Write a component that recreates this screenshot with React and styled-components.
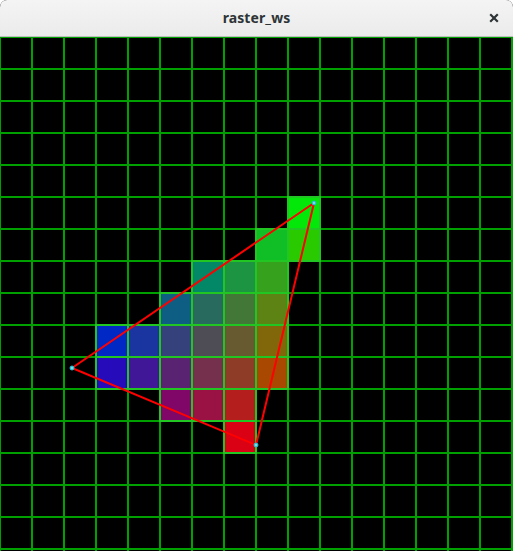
import React from "react";
import styled, { createGlobalStyle } from "styled-components";

const Global = createGlobalStyle`
  html, body { margin: 0; padding: 0; background: #ffffff; }
  body { font-family: "Noto Sans", "DejaVu Sans", sans-serif; }
`;

const Window = styled.div`
  width: 513px;
  height: 551px;
  display: flex;
  flex-direction: column;
  overflow: hidden;
  border-radius: 7px 7px 0 0;
  background: #000;
`;

const TitleBar = styled.header`
  height: 36px;
  flex: 0 0 36px;
  display: grid;
  grid-template-columns: 40px 1fr 40px;
  align-items: center;
  background: linear-gradient(#f4f4f4, #ebebeb);
  border-bottom: 1px solid #bdbdbd;
`;

const Title = styled.h1`
  grid-column: 2;
  margin: 0;
  text-align: center;
  font-family: "Noto Sans", "DejaVu Sans", sans-serif;
  font-size: 14px;
  font-weight: 700;
  color: #2e3436;
  line-height: 36px;
  letter-spacing: 0.1px;
`;

const CloseButton = styled.button`
  grid-column: 3;
  justify-self: end;
  margin-right: 11px;
  width: 16px;
  height: 16px;
  padding: 0;
  border: 0;
  background: transparent;
  display: flex;
  align-items: center;
  justify-content: center;
  cursor: pointer;
`;

const Canvas = styled.svg`
  display: block;
  flex: 1 1 auto;
  width: 513px;
  height: 514px;
  background: #000;
`;

const CELL = 32;
const G = [314, 166];
const B = [72, 331];
const R = [256, 408];

const cells = [
  [5, [9]],
  [6, [8, 9]],
  [7, [6, 7, 8]],
  [8, [5, 6, 7, 8]],
  [9, [3, 4, 5, 6, 7, 8]],
  [10, [3, 4, 5, 6, 7, 8]],
  [11, [5, 6, 7]],
  [12, [7]],
];

function bary(px, py) {
  const [x1, y1] = R, [x2, y2] = G, [x3, y3] = B;
  const d = (y2 - y3) * (x1 - x3) + (x3 - x2) * (y1 - y3);
  let a = ((y2 - y3) * (px - x3) + (x3 - x2) * (py - y3)) / d;
  let b = ((y3 - y1) * (px - x3) + (x1 - x3) * (py - y3)) / d;
  let c = 1 - a - b;
  a = Math.max(0, a); b = Math.max(0, b); c = Math.max(0, c);
  const s = a + b + c;
  return [a / s, b / s, c / s];
}

function cellColor(col, row) {
  const [r, g, b] = bary(col * CELL + 16, row * CELL + 16);
  return `rgb(${Math.round(r * 240)},${Math.round(g * 245)},${Math.round(b * 235)})`;
}

export default function App() {
  const lines = [];
  for (let i = 0; i <= 16; i++) {
    lines.push(<line key={"v" + i} x1={i * CELL} y1={0} x2={i * CELL} y2={514} />);
    lines.push(<line key={"h" + i} x1={0} y1={i * CELL} x2={513} y2={i * CELL} />);
  }
  const rects = [];
  cells.forEach(([row, cols]) =>
    cols.forEach((col) =>
      rects.push(
        <rect
          key={row + "-" + col}
          x={col * CELL}
          y={row * CELL}
          width={CELL}
          height={CELL}
          fill={cellColor(col, row)}
        />
      )
    )
  );
  return (
    <>
      <Global />
      <Window>
        <TitleBar>
          <Title>raster_ws</Title>
          <CloseButton aria-label="Close">
            <svg width="10" height="10" viewBox="0 0 10 10">
              <path d="M1.2 1.2 L8.8 8.8 M8.8 1.2 L1.2 8.8" stroke="#2e3436" strokeWidth="2.2" />
            </svg>
          </CloseButton>
        </TitleBar>
        <Canvas viewBox="0 0 513 514">
          <g stroke="#00a000" strokeWidth="2">{lines}</g>
          <g stroke="#22c622" strokeWidth="2">{rects}</g>
          <polygon
            points={`${G[0]},${G[1]} ${B[0]},${B[1]} ${R[0]},${R[1]}`}
            fill="none"
            stroke="#ff0000"
            strokeWidth="2"
          />
          {[G, B, R].map(([x, y], i) => (
            <circle key={i} cx={x} cy={y} r="2" fill="#7fd8e8" stroke="#10c0d0" strokeWidth="1" />
          ))}
        </Canvas>
      </Window>
    </>
  );
}
